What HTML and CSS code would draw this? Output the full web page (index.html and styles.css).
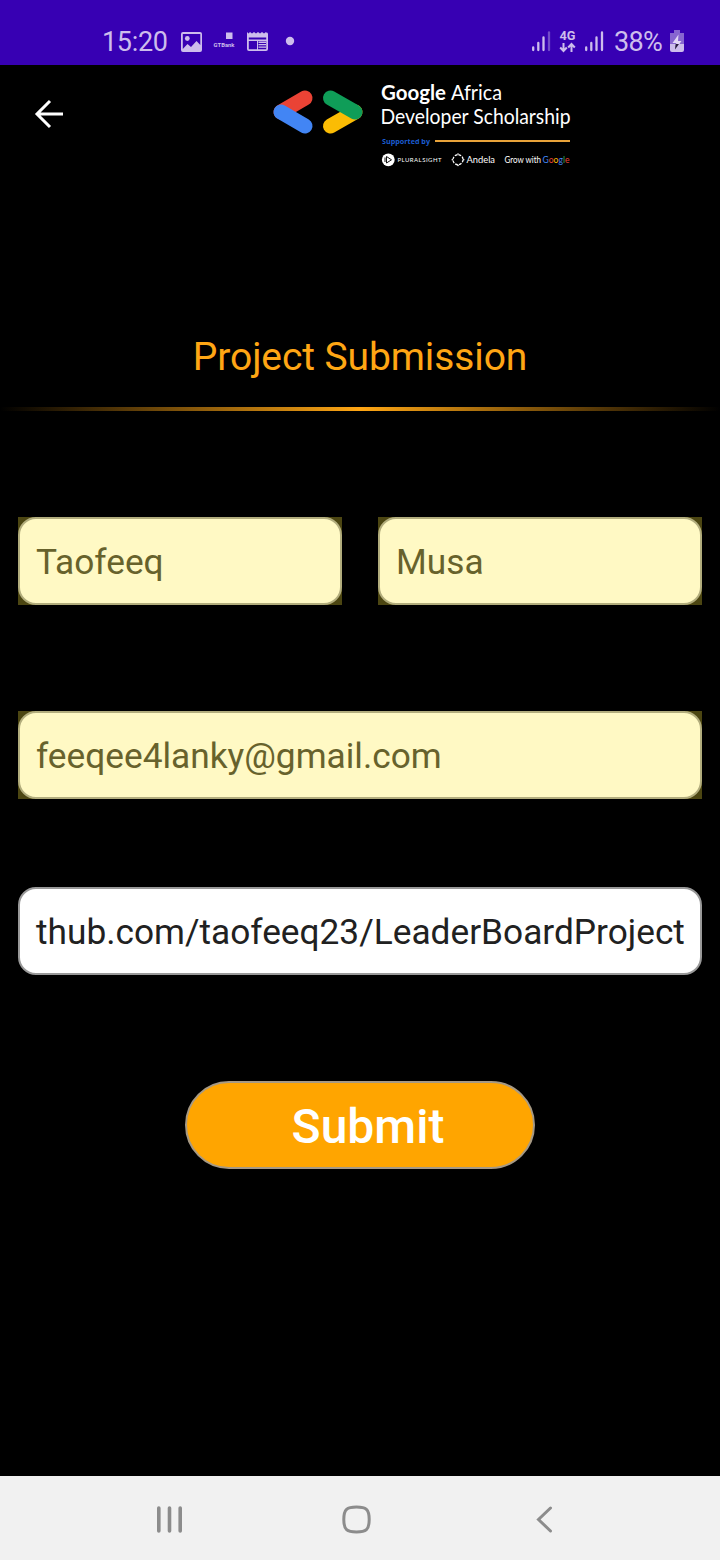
FILE: index.html
```html
<!DOCTYPE html>
<html lang="en">
<head>
<meta charset="utf-8">
<title>Project Submission</title>
<link rel="stylesheet" href="styles.css">
</head>
<body>
<div class="screen">
  <header class="status-bar">
    <div class="status-group">
      <span class="clock">15:20</span>
      <svg class="notifications" width="120" height="26" viewBox="180 28 120 26" fill="#cdbdec">
        <path fill-rule="evenodd" d="M183 32H200Q202 32 202 34V50Q202 52 200 52H183Q181 52 181 50V34Q181 32 183 32ZM182.800 34V49L187.500 44L191 47L196.500 41L200.300 45V34Z"/>
        <circle cx="187.300" cy="38.500" r="2.400"/>
        <rect x="226" y="32.500" width="6.500" height="6.500"/>
        <text class="bank" x="213.500" y="47" textLength="21" lengthAdjust="spacingAndGlyphs">GTBank</text>
        <path fill-rule="evenodd" d="M247 32L248.500 33.500L250 32L252 33.500L254 32L256 33.500L258 32L260 33.500L262 32L264 33.500L266 32L267.500 33.500L268 32V49Q268 51 266 51H249Q247 51 247 49ZM248.800 37.500V39.500H266.200V37.500ZM248.800 41V49.200H257V41ZM258 41V49.200H266.200V41Z"/>
        <path d="M258.500 41.500H266V43H258.500ZM258.500 44H266V45.300H258.500ZM258.500 46.500H266V47.700H258.500Z"/>
        <circle cx="290" cy="41" r="4.200"/>
      </svg>
    </div>
    <div class="status-group">
      <svg class="signals" width="76" height="30" viewBox="530 28 76 30" fill="none" stroke="#cdbdec" stroke-width="2.300" stroke-linecap="round">
        <path d="M533.200 47.500V50M538.300 43V50M543.500 37.500V50M586.200 47.500V50M591.300 43V50M596.500 37.500V50M602 32.500V50"/>
        <path d="M549 32.500V50" opacity=".4"/>
        <g stroke-width="2" stroke-linecap="butt"><path d="M563.500 43V51M560.200 47.500L563.500 51L566.800 47.500M571.500 52V44M568.200 47.500L571.500 44L574.800 47.500"/></g>
        <text class="network" x="559.500" y="40" textLength="16" lengthAdjust="spacingAndGlyphs">4G</text>
      </svg>
      <span class="battery-level">38%</span>
      <svg class="battery" width="16" height="24" viewBox="669 29 16 24">
        <path fill="#8765d0" d="M674 30H680V33H684V44H670V33H674Z"/>
        <path fill="#cdbdec" d="M670 44H684V50Q684 52 682 52H672Q670 52 670 50Z"/>
        <path fill="#e2d7f5" d="M678.500 34.500L672.500 43H676.500L675.500 44.500H679L681.500 41H678Z"/>
        <path fill="#281a3e" d="M675.600 44H679L675 49.500Z"/>
      </svg>
    </div>
  </header>

  <nav class="app-bar">
    <svg class="back" width="30" height="30" viewBox="34 99 30 30" fill="none" stroke="#fff" stroke-width="3"><path d="M63 114H37M50 101L37 114L50 127"/></svg>
    <svg class="brand" width="304" height="94" viewBox="270 80 304 94">
      <g fill="none" stroke-width="15" stroke-linecap="round">
        <path stroke="#ea4335" d="M305 98L281 112"/>
        <path stroke="#4285f4" d="M281 112L305 126"/>
        <path stroke="#fbbc04" d="M330.500 126L355 112"/>
        <path stroke="#0f9d58" d="M330.500 98L355 112"/>
      </g>
      <g class="brand-name">
        <text class="strong" x="381" y="100" textLength="65" lengthAdjust="spacingAndGlyphs">Google</text>
        <text x="451" y="100" textLength="51" lengthAdjust="spacingAndGlyphs">Africa</text>
        <text x="380.500" y="123.500" textLength="190" lengthAdjust="spacingAndGlyphs">Developer Scholarship</text>
      </g>
      <text class="supported" x="382" y="143.500" textLength="48" lengthAdjust="spacingAndGlyphs">Supported by</text>
      <path d="M435 141H570" stroke="#e8a33a" stroke-width="2"/>
      <circle cx="388.300" cy="159.800" r="6.400" fill="#fff"/>
      <path d="M386.500 156.500L391.500 159.800L386.500 163ZM385 157.500V162" fill="none" stroke="#111" stroke-width="1"/>
      <text class="sponsor-small" x="397.500" y="162" textLength="44" lengthAdjust="spacing">PLURALSIGHT</text>
      <circle cx="458" cy="159.700" r="5" fill="none" stroke="#fff" stroke-width="1.300" stroke-dasharray="2.700 1.227"/>
      <g fill="#fff"><circle cx="458" cy="154" r=".8"/><circle cx="458" cy="165.400" r=".8"/><circle cx="452.300" cy="159.700" r=".8"/><circle cx="463.700" cy="159.700" r=".8"/></g>
      <text class="sponsor" x="466.500" y="163" textLength="28.500" lengthAdjust="spacingAndGlyphs">Andela</text>
      <text class="grow" x="504.500" y="163" textLength="36.500" lengthAdjust="spacingAndGlyphs">Grow with</text>
      <text class="grow" x="542.500" y="163" textLength="27" lengthAdjust="spacingAndGlyphs"><tspan fill="#4285f4">G</tspan><tspan fill="#ea4335">o</tspan><tspan fill="#fbbc04">o</tspan><tspan fill="#4285f4">g</tspan><tspan fill="#34a853">l</tspan><tspan fill="#ea4335">e</tspan></text>
    </svg>
  </nav>

  <main class="content">
    <h1 class="title">Project Submission</h1>
    <div class="divider"></div>
    <form class="form">
      <div class="name-row">
        <div class="field autofilled"><div class="box">Taofeeq</div></div>
        <div class="field autofilled"><div class="box">Musa</div></div>
      </div>
      <div class="field autofilled email"><div class="box">feeqee4lanky@gmail.com</div></div>
      <div class="field link"><div class="box">thub.com/taofeeq23/LeaderBoardProject</div></div>
      <button class="submit" type="button">Submit</button>
    </form>
  </main>

  <footer class="nav-bar">
    <svg width="28" height="30" viewBox="155 1505 28 30" fill="none" stroke="#8c8c8c" stroke-width="3.600" stroke-linecap="round"><path d="M158.800 1508V1531M169.500 1508V1531M180.200 1508V1531"/></svg>
    <svg class="home" width="30" height="30" viewBox="342 1505 30 30" fill="none" stroke="#8c8c8c" stroke-width="3"><path d="M356.500 1507C366 1507 369.200 1509 369.200 1519.500S366 1532 356.500 1532S343.800 1530 343.800 1519.500S347 1507 356.500 1507Z"/></svg>
    <svg class="previous" width="18" height="30" viewBox="536 1505 18 30" fill="none" stroke="#8c8c8c" stroke-width="3" stroke-linecap="round"><path d="M550.500 1508L538.500 1519.500L550.500 1531"/></svg>
  </footer>
</div>
</body>
</html>
```
FILE: styles.css
```css
* { box-sizing: border-box; }
body { margin: 0; background: #000; font-family: Roboto, sans-serif; }
svg { display: block; flex: none; }
.screen { width: 720px; height: 1560px; display: flex; flex-direction: column; overflow: hidden; }

.status-bar { height: 65px; flex: none; background: #3700b3; display: flex; justify-content: space-between; padding: 28px 35px 0 102px; color: #cdbdec; }
.status-group { display: flex; align-items: flex-start; }
.clock, .battery-level { font-size: 27px; line-height: 29px; white-space: nowrap; }
.clock { width: 78px; letter-spacing: -0.3px; }
.battery-level { width: 55px; margin-left: 8px; letter-spacing: -0.7px; }
.battery { margin-top: 1px; }
.bank { font: bold 6px Roboto, sans-serif; }
.network { font: bold 13px Roboto, sans-serif; fill: #cdbdec; stroke: none; }

.app-bar { height: 112px; flex: none; display: flex; align-items: flex-start; padding-left: 34px; }
.back { margin-top: 34px; }
.brand { margin: 15px 0 0 206px; overflow: visible; }
.brand-name { font: 20.5px Lato, sans-serif; fill: #fff; }
.brand-name .strong { font-weight: bold; }
.supported { font: bold 7.5px "Open Sans", sans-serif; fill: #1b5cd0; }
.sponsor-small { font: 6px Lato, sans-serif; fill: #fff; }
.sponsor { font: 9.5px Lato, sans-serif; fill: #fff; }
.grow { font: 9px Lato, sans-serif; fill: #fff; }

.content { flex: 1; padding-top: 156px; }
.title { margin: 0; height: 48px; line-height: 48px; font-size: 39px; letter-spacing: -0.1px; font-weight: 400; text-align: center; color: #ffa614; }
.divider { height: 4px; margin-top: 26px; background: linear-gradient(90deg, #000, #ffa614 50%, #000); }
.form { padding: 106px 18px 0; display: flex; flex-direction: column; }
.name-row { display: grid; grid-template-columns: 1fr 1fr; gap: 36px; }
.field { height: 88px; }
.box { height: 88px; border: 2px solid #999; border-radius: 18px; padding: 0 16px; background: #fff; color: #212121; font-size: 35.25px; line-height: 87px; white-space: nowrap; }
.autofilled { background: #4c4612; }
.autofilled .box { background: #fff9c4; border-color: #b2ad7d; color: #67622c; }
.email { margin-top: 106px; }
.link { margin-top: 88px; }
.submit { align-self: center; width: 350px; height: 88px; margin-top: 106px; padding: 3px 0 0 16px; border: 2px solid #a69984; border-radius: 44px; background: #ffa500; color: #fff; font: 500 48px/81px Roboto, sans-serif; }

.nav-bar { height: 84px; flex: none; background: #f1f1f1; display: flex; align-items: flex-start; padding: 29px 0 0 155px; }
.home { margin-left: 159px; }
.previous { margin-left: 164px; }
```
